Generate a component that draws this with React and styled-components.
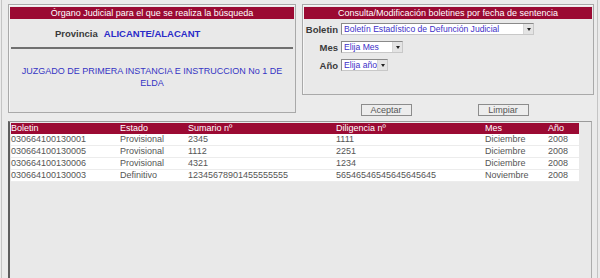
import React from 'react';
import styled, { createGlobalStyle } from 'styled-components';

const GlobalStyle = createGlobalStyle`
  html, body {
    margin: 0;
    padding: 0;
    background: #ebebeb;
    font-family: "Liberation Sans", Arial, sans-serif;
  }
`;

const Frame = styled.div`
  min-height: 278px;
  box-sizing: border-box;
  margin: 0 2px 0 1px;
  padding: 4px 5px 0 6px;
  border-left: 1px solid #c4c4c4;
  border-right: 1px solid #c4c4c4;
`;

const Top = styled.div`
  display: grid;
  grid-template-columns: 288px 292px;
  column-gap: 6px;
  align-items: start;
`;

const Panel = styled.div`
  box-sizing: border-box;
  height: ${p => p.$h}px;
  border: 1px solid #a9a9a9;
  box-shadow: inset 1px 1px 0 #f6f6f6;
  padding: 2px 1px 0 1px;
  background: #e9e9e9;
  display: flex;
  flex-direction: column;
`;

const Bar = styled.div`
  height: 12px;
  background: #9b0a33;
  color: #fff;
  font-size: 9px;
  line-height: 12px;
  text-align: center;
`;

const ProvRow = styled.div`
  height: 28px;
  display: flex;
  align-items: center;
  gap: 6px;
  padding-left: 45px;
  font-size: 9.5px;
  font-weight: bold;
  color: #3a3a3a;
`;

const Value = styled.span`
  color: #2a2ac8;
`;

const Rule = styled.div`
  height: 2px;
  background: #707070;
  margin: 0 1px;
`;

const Court = styled.div`
  padding: 17px 10px 0;
  text-align: center;
  color: #3535c4;
  font-size: 9px;
  line-height: 11.5px;
`;

const Side = styled.div`
  display: flex;
  flex-direction: column;
`;

const Form = styled.div`
  display: grid;
  grid-template-columns: 33px auto;
  column-gap: 3px;
  row-gap: 6px;
  padding: 4px 0 0 1px;
  justify-items: start;
  align-items: center;
`;

const Label = styled.span`
  justify-self: end;
  font-size: 9.5px;
  font-weight: bold;
  color: #3a3a3a;
`;

const Select = styled.div`
  box-sizing: border-box;
  width: ${p => p.$w}px;
  height: 12px;
  display: flex;
  align-items: center;
  background: #fff;
  border: 1px solid #c8c8c8;
  border-left-color: #8a8a8a;
  border-top-color: #8a8a8a;
  color: #3d30c8;
  font-size: 8.6px;
`;

const SelectText = styled.span`
  flex: 1;
  padding-left: 2px;
  white-space: nowrap;
  overflow: hidden;
`;

const Arrow = styled.span`
  width: 9px;
  height: 10px;
  background: #e4e4e4;
  border-left: 1px solid #d8d8d8;
  display: flex;
  align-items: center;
  justify-content: center;
  &::after {
    content: '';
    border-left: 2.5px solid transparent;
    border-right: 2.5px solid transparent;
    border-top: 3px solid #222;
  }
`;

const Buttons = styled.div`
  display: flex;
  justify-content: center;
  gap: 66px;
  margin-top: 9px;
  padding-right: 7px;
`;

const Button = styled.button`
  width: 51px;
  height: 12px;
  padding: 0;
  box-sizing: border-box;
  background: #ededed;
  border: 1px solid #8c8c8c;
  color: #555;
  font-family: inherit;
  font-size: 9px;
  line-height: 10px;
`;

const ListBox = styled.div`
  margin-top: 5px;
  width: 584px;
  min-height: 160px;
  box-sizing: border-box;
  background: #e9e9e9;
  border-left: 2px solid #5e5e5e;
  border-top: 1px solid #9a9a9a;
  border-right: 1px solid #adadad;
  padding: 1px 0 0 1px;
`;

const Table = styled.table`
  width: 568px;
  border-collapse: collapse;
  table-layout: fixed;
  background: #fff;
  font-size: 9px;
  color: #555;
`;

const Th = styled.th`
  width: ${p => p.$w}px;
  height: 11px;
  padding: 0;
  background: #9b0a33;
  color: #fff;
  font-weight: normal;
  text-align: left;
  line-height: 11px;
`;

const Td = styled.td`
  height: 11px;
  padding: 0;
  line-height: 11px;
  border-bottom: 1px solid #ececec;
  white-space: nowrap;
`;

const columns = [
  ['Boletin', 109],
  ['Estado', 68],
  ['Sumario nº', 148],
  ['Diligencia nº', 149],
  ['Mes', 63],
  ['Año', 31],
];

const rows = [
  ['030664100130001', 'Provisional', '2345', '1111', 'Diciembre', '2008'],
  ['030664100130005', 'Provisional', '1112', '2251', 'Diciembre', '2008'],
  ['030664100130006', 'Provisional', '4321', '1234', 'Diciembre', '2008'],
  ['030664100130003', 'Definitivo', '12345678901455555555', '56546546545645645645', 'Noviembre', '2008'],
];

export default function App() {
  return (
    <>
      <GlobalStyle />
      <Frame>
        <Top>
          <Panel $h={109}>
            <Bar>Órgano Judicial para el que se realiza la búsqueda</Bar>
            <ProvRow>
              Provincia <Value>ALICANTE/ALACANT</Value>
            </ProvRow>
            <Rule />
            <Court>
              JUZGADO DE PRIMERA INSTANCIA E INSTRUCCION No 1 DE
              <br />
              ELDA
            </Court>
          </Panel>
          <Side>
            <Panel $h={91}>
              <Bar>Consulta/Modificación boletines por fecha de sentencia</Bar>
              <Form>
                <Label>Boletin</Label>
                <Select $w={193}>
                  <SelectText>Boletín Estadístico de Defunción Judicial</SelectText>
                  <Arrow />
                </Select>
                <Label>Mes</Label>
                <Select $w={62}>
                  <SelectText>Elija Mes</SelectText>
                  <Arrow />
                </Select>
                <Label>Año</Label>
                <Select $w={47}>
                  <SelectText>Elija año</SelectText>
                  <Arrow />
                </Select>
              </Form>
            </Panel>
            <Buttons>
              <Button>Aceptar</Button>
              <Button>Limpiar</Button>
            </Buttons>
          </Side>
        </Top>
        <ListBox>
          <Table>
            <thead>
              <tr>
                {columns.map(([name, w]) => (
                  <Th key={name} $w={w}>{name}</Th>
                ))}
              </tr>
            </thead>
            <tbody>
              {rows.map(r => (
                <tr key={r[0]}>
                  {r.map((c, i) => (
                    <Td key={i}>{c}</Td>
                  ))}
                </tr>
              ))}
            </tbody>
          </Table>
        </ListBox>
      </Frame>
    </>
  );
}
